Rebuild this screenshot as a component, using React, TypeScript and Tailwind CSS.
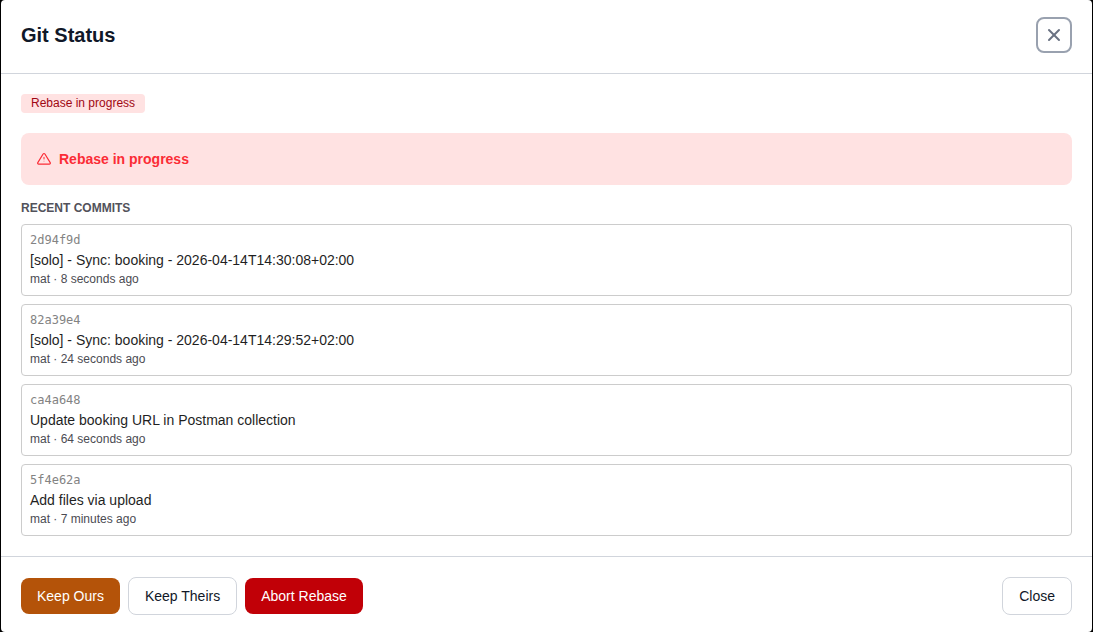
import { X } from 'lucide-react'
import { clsx } from 'clsx'
import type { ButtonHTMLAttributes } from 'react'

interface Commit {
  hash: string
  message: string
  author: string
  age: string
}

const commits: Commit[] = [
  {
    hash: '2d94f9d',
    message: '[solo] - Sync: booking - 2026-04-14T14:30:08+02:00',
    author: 'mat',
    age: '8 seconds ago'
  },
  {
    hash: '82a39e4',
    message: '[solo] - Sync: booking - 2026-04-14T14:29:52+02:00',
    author: 'mat',
    age: '24 seconds ago'
  },
  {
    hash: 'ca4a648',
    message: 'Update booking URL in Postman collection',
    author: 'mat',
    age: '64 seconds ago'
  },
  {
    hash: '5f4e62a',
    message: 'Add files via upload',
    author: 'mat',
    age: '7 minutes ago'
  }
]

type Variant = 'warning' | 'secondary' | 'danger'

const variants: Record<Variant, string> = {
  warning: 'bg-[#b45309] text-white hover:bg-amber-800',
  secondary: 'border border-gray-300 bg-white text-gray-900 hover:bg-gray-50',
  danger: 'bg-[#c10007] text-white hover:bg-red-800'
}

interface ActionButtonProps extends ButtonHTMLAttributes<HTMLButtonElement> {
  variant: Variant
}

function ActionButton({ variant, children, ...props }: ActionButtonProps) {
  return (
    <button
      type="button"
      className={clsx('rounded-lg px-4 py-2 text-sm font-medium', variants[variant])}
      {...props}
    >
      {children}
    </button>
  )
}

function WarningIcon() {
  return (
    <svg
      viewBox="0 0 14 14"
      fill="none"
      stroke="currentColor"
      strokeWidth="1.2"
      strokeLinecap="round"
      strokeLinejoin="round"
      aria-hidden="true"
      className="size-3.5"
    >
      <path d="M6.1 2 .8 10.6A1 1 0 0 0 1.7 12.1H12.3A1 1 0 0 0 13.2 10.6L7.9 2A1.05 1.05 0 0 0 6.1 2Z" />
      <path d="M7 5.3V7" strokeWidth="1" />
      <path d="M7 9.2h.01" strokeWidth="0.6" />
    </svg>
  )
}

function CommitCard({ commit }: { commit: Commit }) {
  return (
    <li className="rounded border border-[#cccccc] p-2">
      <div className="font-['DejaVu_Sans_Mono',monospace] text-xs leading-[14px] text-[#838383]">
        {commit.hash}
      </div>
      <div className="mt-0.5 text-sm leading-[22px] text-[#1f1f1f]">{commit.message}</div>
      <div className="text-xs text-[#4b4b52]">
        {commit.author} · {commit.age}
      </div>
    </li>
  )
}

export default function App() {
  return (
    <div className="min-h-screen bg-black px-px font-['Liberation_Sans',Arial,sans-serif]">
      <div
        role="dialog"
        aria-labelledby="git-status-title"
        className="flex min-h-screen flex-col rounded-sm bg-white"
      >
        <header className="flex items-center justify-between border-b border-gray-300 px-5 pt-[17px] pb-5">
          <h2 id="git-status-title" className="text-xl font-semibold text-gray-900">
            Git Status
          </h2>
          <button
            type="button"
            aria-label="Close dialog"
            className="flex size-9 items-center justify-center rounded-lg border-2 border-gray-400 text-gray-500 hover:bg-gray-50"
          >
            <X className="size-5" strokeWidth={2.4} />
          </button>
        </header>

        <main className="flex-1 p-5">
          <div className="flex">
            <span className="rounded bg-[#ffe2e2] px-2.5 pt-px pb-0.5 text-xs text-[#9f0712]">
              Rebase in progress
            </span>
          </div>

          <div className="mt-5 flex items-center gap-2 rounded-lg bg-[#ffe2e2] p-4 text-sm font-semibold text-[#fb2c36]">
            <WarningIcon />
            <span>Rebase in progress</span>
          </div>

          <h3 className="mt-4 text-xs leading-[15px] font-semibold text-[#52525b] uppercase">
            Recent Commits
          </h3>
          <ul className="mt-2 flex flex-col gap-2">
            {commits.map((commit) => (
              <CommitCard key={commit.hash} commit={commit} />
            ))}
          </ul>
        </main>

        <footer className="flex items-center justify-between border-t border-gray-300 px-5 pt-5 pb-[17px]">
          <div className="flex items-center gap-2">
            <ActionButton variant="warning">Keep Ours</ActionButton>
            <ActionButton variant="secondary">Keep Theirs</ActionButton>
            <ActionButton variant="danger">Abort Rebase</ActionButton>
          </div>
          <ActionButton variant="secondary">Close</ActionButton>
        </footer>
      </div>
    </div>
  )
}
